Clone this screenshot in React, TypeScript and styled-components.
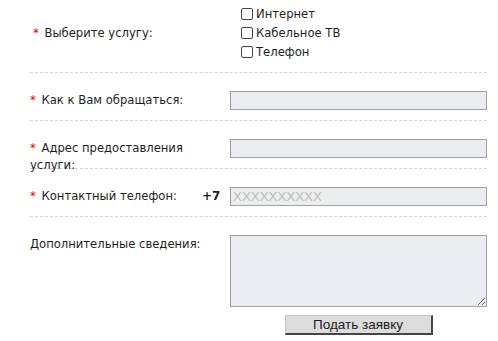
import React, { useState } from 'react'
import styled, { createGlobalStyle } from 'styled-components'

const GlobalStyle = createGlobalStyle`
  body {
    margin: 0;
    background: #fff;
    font-family: "DejaVu Sans", Verdana, sans-serif;
    font-size: 11.6px;
    color: #1e1e1e;
  }
`

const services = ['Интернет', 'Кабельное ТВ', 'Телефон']

const App = () => {
  const [checked, setChecked] = useState<string[]>([])
  const [name, setName] = useState<string>('')
  const [address, setAddress] = useState<string>('')
  const [phone, setPhone] = useState<string>('')
  const [info, setInfo] = useState<string>('')

  const toggle = (s: string) => {
    setChecked(checked.includes(s) ? checked.filter((c) => c !== s) : [...checked, s])
  }

  return (
    <>
      <GlobalStyle />
      <Form onSubmit={(e) => e.preventDefault()}>
        <Row $first>
          <LabelCell>
            <Label $indent>
              <Star>*</Star> Выберите услугу:
            </Label>
          </LabelCell>
          <Checks>
            {services.map((s) => (
              <CheckItem key={s}>
                <Box type="checkbox" checked={checked.includes(s)} onChange={() => toggle(s)} />
                {s}
              </CheckItem>
            ))}
          </Checks>
        </Row>

        <Row>
          <LabelCell>
            <Label>
              <Star>*</Star> Как к Вам обращаться:
            </Label>
          </LabelCell>
          <Input value={name} onChange={(e) => setName(e.target.value)} />
        </Row>

        <Row>
          <LabelCell>
            <Label>
              <Star>*</Star> Адрес предоставления услуги:
            </Label>
          </LabelCell>
          <Input value={address} onChange={(e) => setAddress(e.target.value)} />
        </Row>

        <Row>
          <LabelCell>
            <Label>
              <Star>*</Star> Контактный телефон:
            </Label>
            <Prefix>+7</Prefix>
          </LabelCell>
          <Input
            placeholder="XXXXXXXXXX"
            value={phone}
            onChange={(e) => setPhone(e.target.value)}
          />
        </Row>

        <LastRow>
          <LabelCell>
            <Label>Дополнительные сведения:</Label>
          </LabelCell>
          <Field>
            <TextArea value={info} onChange={(e) => setInfo(e.target.value)} />
            <Submit type="submit">Подать заявку</Submit>
          </Field>
        </LastRow>
      </Form>
    </>
  )
}

export default App

const Form = styled.form`
  width: 457px;
  margin-left: 30px;
`

const Row = styled.div<{ $first?: boolean }>`
  display: flex;
  align-items: ${(p) => (p.$first ? 'center' : 'flex-start')};
  box-sizing: border-box;
  height: ${(p) => (p.$first ? '73px' : '48px')};
  padding: ${(p) => (p.$first ? '0 0 6px' : '18px 0 0')};
  border-bottom: 1px dashed #d4d4d4;
`

const LastRow = styled.div`
  display: flex;
  align-items: flex-start;
  padding-top: 18px;
`

const LabelCell = styled.div`
  width: 200px;
  flex-shrink: 0;
  display: flex;
  align-items: flex-start;
`

const Label = styled.div<{ $indent?: boolean }>`
  flex: 1;
  max-width: 180px;
  line-height: 17px;
  padding-top: 1px;
  padding-left: ${(p) => (p.$indent ? '3px' : '0')};
`

const Star = styled.span`
  color: #d40000;
  margin-right: 2px;
`

const Prefix = styled.div`
  width: 30px;
  line-height: 17px;
  padding-top: 1px;
  font-weight: bold;
  font-size: 12px;
  padding-left: 2px;
  box-sizing: border-box;
`

const Checks = styled.div`
  display: flex;
  flex-direction: column;
  padding-left: 11px;
`

const CheckItem = styled.label`
  display: flex;
  align-items: center;
  height: 19px;
`

const Box = styled.input`
  appearance: none;
  width: 12px;
  height: 12px;
  margin: 0 3px 0 0;
  border: 1px solid #444;
  border-radius: 2px;
  background: #fff;
  box-sizing: border-box;

  &:checked {
    background: #444;
  }
`

const Input = styled.input`
  width: 257px;
  height: 19px;
  box-sizing: border-box;
  margin: 0;
  padding: 0 2px;
  border: 1px solid #a0a0a0;
  background: #ebedf1;
  font-family: "Liberation Sans", Arial, sans-serif;
  font-size: 13.33px;
  color: #222;
  outline: none;

  &::placeholder {
    color: #bcbcbc;
  }
`

const Field = styled.div`
  display: flex;
  flex-direction: column;
  align-items: center;
  width: 257px;
`

const TextArea = styled.textarea`
  width: 257px;
  height: 72px;
  box-sizing: border-box;
  margin: 0;
  padding: 2px;
  border: 1px solid #a0a0a0;
  background: #ebedf1;
  font-family: "Liberation Sans", Arial, sans-serif;
  font-size: 13px;
  outline: none;
`

const Submit = styled.button`
  margin-top: 8px;
  width: 148px;
  height: 20px;
  box-sizing: border-box;
  padding: 0;
  background: #dcdcdc;
  border-style: solid;
  border-width: 1px 2px 2px 1px;
  border-color: #c4c4c4 #444 #444 #c4c4c4;
  font-family: "Liberation Sans", Arial, sans-serif;
  font-size: 13.5px;
  color: #1a1a1a;
  cursor: pointer;
`
